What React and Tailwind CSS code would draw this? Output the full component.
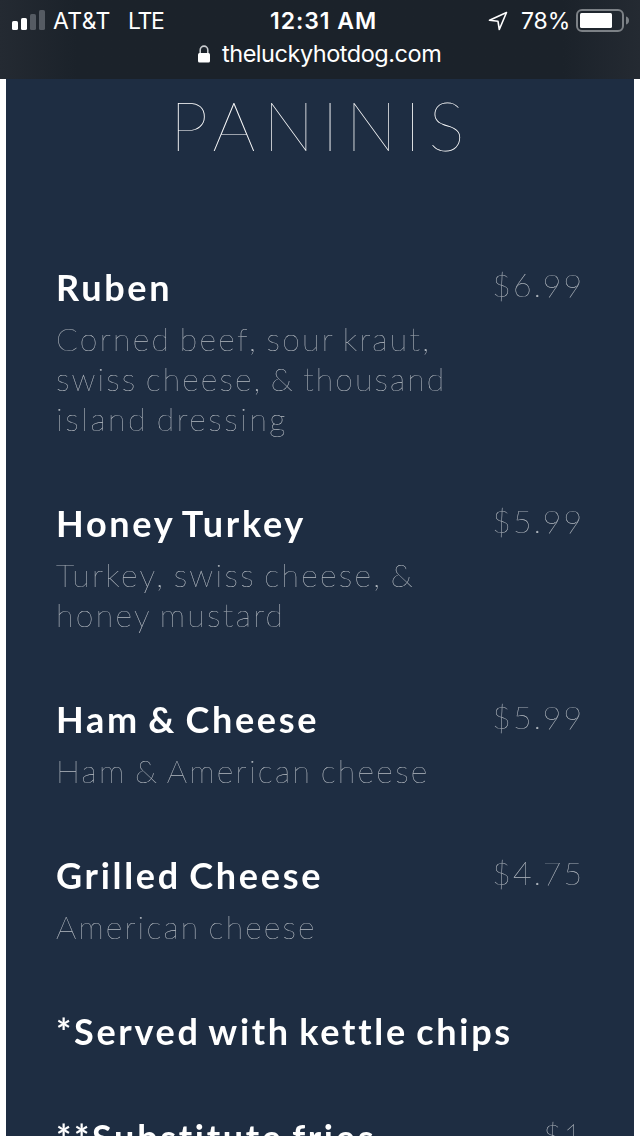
const items = [
  {
    name: 'Ruben',
    price: '$6.99',
    lines: [
      ['Corned beef, sour kraut,', 'tracking-[2.3px]'],
      ['swiss cheese, & thousand', 'tracking-[2.13px]'],
      ['island dressing', 'tracking-[2.57px]'],
    ],
  },
  {
    name: 'Honey Turkey',
    price: '$5.99',
    lines: [
      ['Turkey, swiss cheese, &', 'tracking-[2.3px]'],
      ['honey mustard', 'tracking-[2.35px]'],
    ],
  },
  { name: 'Ham & Cheese', price: '$5.99', lines: [['Ham & American cheese', 'tracking-[2.3px]']] },
  { name: 'Grilled Cheese', price: '$4.75', lines: [['American cheese', 'tracking-[2.15px]']] },
  { name: '*Served with kettle chips', lines: [], compact: true },
  { name: '**Substitute fries', price: '$1', lines: [] },
];

function MenuItem({ name, price, lines, compact }) {
  return (
    <li className={`flex justify-between ${compact ? 'mb-[44px]' : 'mb-[54px]'}`}>
      <div className="[word-spacing:-3px]">
        <h2 className="h-[62px] text-[36px] leading-[60px] font-bold tracking-[2.7px] whitespace-nowrap text-white">{name}</h2>
        {lines.map(([line, tracking]) => (
          <p key={line} className={`h-10 text-[32px] leading-10 font-thin whitespace-nowrap text-[#b4bac1] [-webkit-text-stroke:0.15px_#b4bac1] ${tracking}`}>{line}</p>
        ))}
      </div>
      <span className="text-[32px] leading-[56px] font-thin tracking-[2px] text-[#b4bac1] [-webkit-text-stroke:0.15px_#b4bac1]">{price}</span>
    </li>
  );
}

function Signal() {
  return (
    <svg width="34" height="20" viewBox="0 0 34 20" fill="#fff">
      <rect x="0" y="11" width="6" height="9" rx="1.6" />
      <rect x="9" y="8" width="6" height="12" rx="1.6" />
      <g fill="#555b63">
        <rect x="18" y="4" width="6" height="16" rx="1.6" />
        <rect x="27" y="0" width="6" height="20" rx="1.6" />
      </g>
    </svg>
  );
}

function Battery() {
  return (
    <svg width="54" height="23" viewBox="0 0 54 23">
      <rect x="1" y="1" width="46" height="21" rx="5" fill="none" stroke="#7c8186" strokeWidth="2" />
      <rect x="4" y="4" width="32" height="15" rx="1.5" fill="#fff" />
      <path d="M50 7.5C52 8 53 9.500 53 11.500S52 15 50 15.500Z" fill="#7c8186" />
    </svg>
  );
}

export default function App() {
  return (
    <div className="h-[1136px] w-[640px] overflow-hidden bg-white font-['Lato',sans-serif]">
      <header className="h-[79px] bg-linear-to-r from-[#242a32] via-[#1b222a] via-12% to-[#1b222a] font-['Inter',sans-serif] text-white">
        <div className="h-full bg-linear-to-r from-transparent from-88% to-[#242a32]">
          <div className="flex h-[41px] items-center text-[23px] whitespace-nowrap">
            <div className="ml-3 w-[41px] pb-px"><Signal /></div>
            <span className="w-[75px] pt-px tracking-[0.35px]">AT&amp;T</span>
            <span className="w-[142px] pt-px tracking-[-1.3px]">LTE</span>
            <span className="w-[218px] pt-px font-semibold tracking-[0.95px]">12:31 AM</span>
            <svg width="21" height="20" viewBox="0 0 21 20" fill="none" stroke="#fff" strokeWidth="1.6" strokeLinejoin="round">
              <path d="M18.500 1.500 1.500 9.300 10 10.300 11.300 18.500Z" />
            </svg>
            <span className="ml-3 w-[55px] pt-px tracking-[-0.1px]">78%</span>
            <Battery />
          </div>
          <div className="flex h-[26px] items-center pl-[198px]">
            <svg width="12" height="18" viewBox="0 0 12 18">
              <path d="M2.200 9V5a3.800 3.900 0 0 1 7.600 0v4" fill="none" stroke="#c9cccf" strokeWidth="1.600" />
              <rect y="8" width="12" height="9.500" rx="1.500" fill="#fff" />
            </svg>
            <span className="ml-[12px] text-[23.5px] leading-[26px] tracking-[-0.47px]">theluckyhotdog.com</span>
          </div>
        </div>
      </header>
      <main className="mx-[6px] h-[1057px] overflow-hidden bg-[#1e2d42] px-[50px]">
        <h1 className="h-[178px] pt-[6px] pl-[2px] text-center text-[68px] leading-[80px] font-thin tracking-[7.6px] text-white will-change-transform">PANINIS</h1>
        <ul className="will-change-transform">{items.map((item) => <MenuItem key={item.name} {...item} />)}</ul>
      </main>
    </div>
  );
}
